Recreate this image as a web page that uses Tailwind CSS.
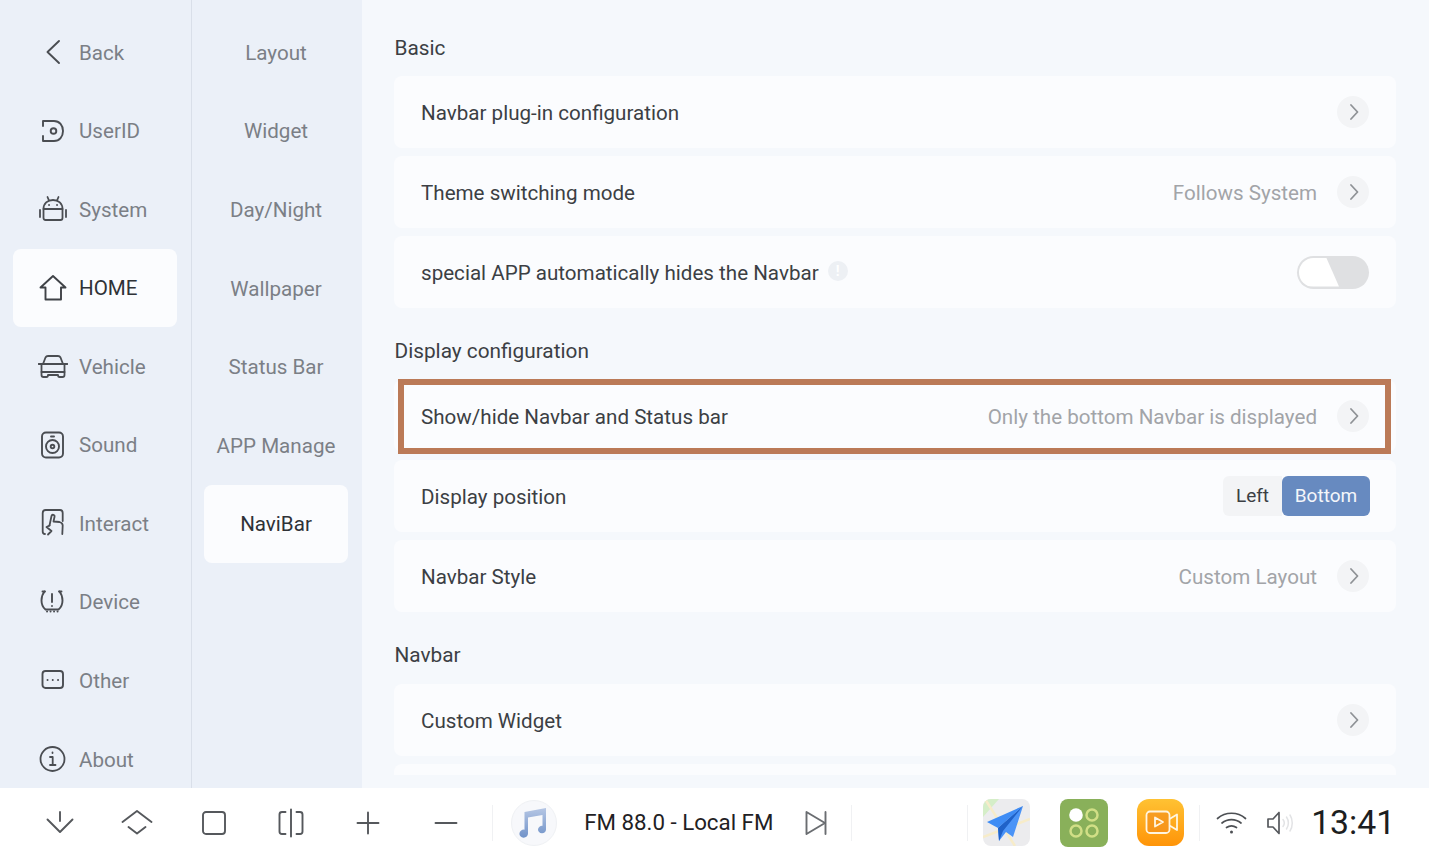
<!DOCTYPE html>
<html>
<head>
  <meta charset="UTF-8">
  <title>Settings</title>
  <script src="https://cdn.jsdelivr.net/npm/@tailwindcss/browser@4"></script>
</head>
<body class="w-[1429px] h-[857px] overflow-hidden bg-white font-['Roboto',sans-serif]">
  <div class="flex h-[788px] overflow-hidden">

    <!-- main menu -->
    <div class="w-[192px] shrink-0 bg-[#ebf0f8] border-r border-[#d9dfe9] pt-[13px] pl-[13px] pr-[14px] text-[20.6px] text-[#7b7f86]">
      <div class="h-[78.6px] flex items-center gap-[11px] pl-[25px]">
        <svg class="w-[30px] h-[30px]" viewBox="0 0 30 30" fill="none" stroke="#4a4d52" stroke-width="1.9" stroke-linecap="round" stroke-linejoin="round"><path d="M21 4 L9.5 15 L21 26"/></svg>
        <span class="pt-[2px]">Back</span>
      </div>
      <div class="h-[78.6px] flex items-center gap-[11px] pl-[25px]">
        <svg class="w-[30px] h-[30px]" viewBox="0 0 30 30" fill="none" stroke="#4a4d52" stroke-width="1.9" stroke-linecap="round" stroke-linejoin="round"><path d="M5 10 V5 H16 C21.5 5 25 9.5 25 15 C25 20.5 21.5 25 16 25 H5 V20"/><circle cx="15.5" cy="15" r="2.8"/></svg>
        <span class="pt-[2px]">UserID</span>
      </div>
      <div class="h-[78.6px] flex items-center gap-[11px] pl-[25px]">
        <svg class="w-[30px] h-[30px]" viewBox="0 0 30 30" fill="none" stroke="#4a4d52" stroke-width="1.8" stroke-linecap="round" stroke-linejoin="round"><path d="M5.5 15 C5.5 9.5 9.5 6 15 6 C20.5 6 24.5 9.5 24.5 15 V24 C24.5 25.5 23.5 26 22.5 26 H7.5 C6.5 26 5.5 25.5 5.5 24 Z"/><path d="M5.5 15 H24.5"/><path d="M9.5 3 L11 6.5 M20.5 3 L19 6.5"/><path d="M2 16 V23 M28 16 V23"/><path d="M11 11 h.1 M19 11 h.1"/></svg>
        <span class="pt-[2px]">System</span>
      </div>
      <div class="h-[78px] flex items-center gap-[11px] pl-[25px] bg-[#fbfcfe] rounded-lg text-[#2f3237]">
        <svg class="w-[30px] h-[30px]" viewBox="0 0 30 30" fill="none" stroke="#3f4247" stroke-width="1.9" stroke-linecap="round" stroke-linejoin="round"><path d="M15 3 L27.5 14.5 H23 V26.5 H7.5 V14.5 H2.5 Z"/></svg>
        <span class="pt-[2px]">HOME</span>
      </div>
      <div class="h-[78.6px] flex items-center gap-[11px] pl-[25px]">
        <svg class="w-[30px] h-[30px]" viewBox="0 0 30 30" fill="none" stroke="#4a4d52" stroke-width="1.8" stroke-linecap="round" stroke-linejoin="round"><path d="M5 13 L7.5 6.5 C8 5.5 8.8 5 10 5 H20 C21.2 5 22 5.5 22.5 6.5 L25 13"/><path d="M0.5 13 H29.5"/><path d="M3.5 13 V24 C3.5 25.5 4.5 26 5.5 26 H8.5 C9.5 26 10 25 10 24 H20 C20 25 20.5 26 21.5 26 H24.5 C25.5 26 26.5 25.5 26.5 24 V13"/><path d="M3.5 21 H26.5"/></svg>
        <span class="pt-[2px]">Vehicle</span>
      </div>
      <div class="h-[78.6px] flex items-center gap-[11px] pl-[25px]">
        <svg class="w-[30px] h-[30px]" viewBox="0 0 30 30" fill="none" stroke="#4a4d52" stroke-width="1.9" stroke-linecap="round" stroke-linejoin="round"><rect x="4" y="2.5" width="21" height="25" rx="4"/><circle cx="14.5" cy="16.5" r="6.5"/><circle cx="14.5" cy="16.5" r="1.8"/><path d="M13 6.5 H16"/></svg>
        <span class="pt-[2px]">Sound</span>
      </div>
      <div class="h-[78.6px] flex items-center gap-[11px] pl-[25px]">
        <svg class="w-[30px] h-[30px]" viewBox="0 0 30 30" fill="none" stroke="#4a4d52" stroke-width="1.8" stroke-linecap="round" stroke-linejoin="round"><path d="M7 26 C5.5 26 4.7 25 4.7 23.5 V5 C4.7 3 5.7 2 7.7 2 H22 C24 2 24.7 3 24.7 5 V13"/><path d="M11.5 17.5 L13.5 8 C14 6 17 6.5 16.5 9 L15.5 13.5 L21.5 14 C23.5 14.5 24.7 15.5 24.7 17.5 L24.3 26"/><path d="M11.5 17.5 L8.5 19 L13.5 23 L10 26.5"/></svg>
        <span class="pt-[2px]">Interact</span>
      </div>
      <div class="h-[78.6px] flex items-center gap-[11px] pl-[25px]">
        <svg class="w-[30px] h-[30px]" viewBox="0 0 30 30" fill="none" stroke="#4a4d52" stroke-width="1.9" stroke-linecap="round" stroke-linejoin="round"><path d="M6.5 4.5 C4.5 7 3.5 10 3.5 13.5 C3.5 17.5 5 20.5 7.5 22.5 H20.5 C23 20.5 24.5 17.5 24.5 13.5 C24.5 10 23.5 7 21.5 4.5"/><path d="M4.5 4.5 H7 M23.5 4.5 H21"/><path d="M14 7 V15 M14 19 V19.1"/><path d="M9 24.5 h.1 M12.5 24.5 h.1 M16 24.5 h.1 M19.5 24.5 h.1"/></svg>
        <span class="pt-[2px]">Device</span>
      </div>
      <div class="h-[78.6px] flex items-center gap-[11px] pl-[25px]">
        <svg class="w-[30px] h-[30px]" viewBox="0 0 30 30" fill="none" stroke="#4a4d52" stroke-width="1.9" stroke-linecap="round" stroke-linejoin="round"><rect x="4.5" y="6" width="20.5" height="17" rx="3"/><path d="M9.5 15 h.1 M14.7 15 h.1 M20 15 h.1"/></svg>
        <span class="pt-[2px]">Other</span>
      </div>
      <div class="h-[78.6px] flex items-center gap-[11px] pl-[25px]">
        <svg class="w-[30px] h-[30px]" viewBox="0 0 30 30" fill="none" stroke="#4a4d52" stroke-width="1.8" stroke-linecap="round" stroke-linejoin="round"><circle cx="14.5" cy="15" r="12"/><path d="M14.5 8.5 v.6 M12 13 H14.7 V21 M12 21 H17.5"/></svg>
        <span class="pt-[2px]">About</span>
      </div>
    </div>

    <!-- sub menu -->
    <div class="w-[170px] shrink-0 bg-[#ebf0f8] pt-[13px] pl-[12px] pr-[14px] text-[20.6px] text-[#7b7f86] text-center">
      <div class="h-[78.6px] pt-[2px] flex items-center justify-center">Layout</div>
      <div class="h-[78.6px] pt-[2px] flex items-center justify-center">Widget</div>
      <div class="h-[78.6px] pt-[2px] flex items-center justify-center">Day/Night</div>
      <div class="h-[78.6px] pt-[2px] flex items-center justify-center">Wallpaper</div>
      <div class="h-[78.6px] pt-[2px] flex items-center justify-center">Status Bar</div>
      <div class="h-[78.6px] pt-[2px] flex items-center justify-center">APP Manage</div>
      <div class="h-[78.6px] pt-[2px] flex items-center justify-center bg-[#fbfcfe] rounded-lg text-[#2f3237]">NaviBar</div>
    </div>

    <!-- settings -->
    <div class="flex-1 bg-[#f5f8fc] pl-[32px] pr-[33px] text-[20.6px] text-[#3c3f44] overflow-hidden">
      <div class="h-[76px] pt-[33px] leading-[30px] pl-[0.5px] text-[20.8px]">Basic</div>

      <div class="h-[72px] mb-2 flex items-center bg-[#fbfcfe] rounded-lg pl-[27px] pr-[27px]">
        <span class="flex-1 pt-[3px]">Navbar plug-in configuration</span>
        <span class="w-8 h-8 rounded-full bg-[#f3f4f6] flex items-center justify-center">
          <svg class="w-4 h-4 ml-[2px]" viewBox="0 0 16 16" fill="none" stroke="#8f9296" stroke-width="1.8" stroke-linecap="round" stroke-linejoin="round"><path d="M5 1 L11.5 8 L5 15"/></svg>
        </span>
      </div>
      <div class="h-[72px] mb-2 flex items-center bg-[#fbfcfe] rounded-lg pl-[27px] pr-[27px]">
        <span class="flex-1 pt-[3px]">Theme switching mode</span>
        <span class="text-[#a2a4a8] mr-[20px] pt-[3px]">Follows System</span>
        <span class="w-8 h-8 rounded-full bg-[#f3f4f6] flex items-center justify-center">
          <svg class="w-4 h-4 ml-[2px]" viewBox="0 0 16 16" fill="none" stroke="#8f9296" stroke-width="1.8" stroke-linecap="round" stroke-linejoin="round"><path d="M5 1 L11.5 8 L5 15"/></svg>
        </span>
      </div>
      <div class="h-[72px] flex items-center bg-[#fbfcfe] rounded-lg pl-[27px] pr-[27px]">
        <span class="pt-[3px]">special APP automatically hides the Navbar</span>
        <span class="ml-[9px] w-5 h-5 rounded-full bg-[#edf0f4] flex items-center justify-center -mt-[2px] text-white text-[14px] font-bold">!</span>
        <span class="flex-1"></span>
        <span class="relative w-[72px] h-[33px] rounded-full bg-[#dfe0e2] overflow-hidden">
          <span class="absolute left-[2px] top-[2px] w-[40px] h-[29px] bg-white rounded-l-full [clip-path:polygon(0_0,68%_0,100%_100%,0_100%)]"></span>
        </span>
      </div>

      <div class="h-[72px] pt-[28px] leading-[30px] pl-[0.5px] text-[20.8px]">Display configuration</div>

      <div class="relative h-[72px] mb-2 flex items-center bg-[#fbfcfe] rounded-lg pl-[27px] pr-[27px]">
        <span class="flex-1 pt-[3px]">Show/hide Navbar and Status bar</span>
        <span class="text-[#a2a4a8] mr-[20px] pt-[3px]">Only the bottom Navbar is displayed</span>
        <span class="w-8 h-8 rounded-full bg-[#f3f4f6] flex items-center justify-center">
          <svg class="w-4 h-4 ml-[2px]" viewBox="0 0 16 16" fill="none" stroke="#8f9296" stroke-width="1.8" stroke-linecap="round" stroke-linejoin="round"><path d="M5 1 L11.5 8 L5 15"/></svg>
        </span>
        <div class="absolute left-[4px] -top-px w-[993px] h-[75px] border-[6px] border-[#bb7a57]"></div>
      </div>
      <div class="h-[72px] mb-2 flex items-center bg-[#fbfcfe] rounded-lg pl-[27px] pr-[26px]">
        <span class="flex-1 pt-[3px]">Display position</span>
        <div class="flex h-10 text-[19px]">
          <span class="w-[59px] flex items-center justify-center bg-[#f3f4f6] rounded-l-md text-[#3c3f44]">Left</span>
          <span class="w-[88px] flex items-center justify-center bg-[#678ac0] rounded-md text-[#f4f6fa]">Bottom</span>
        </div>
      </div>
      <div class="h-[72px] flex items-center bg-[#fbfcfe] rounded-lg pl-[27px] pr-[27px]">
        <span class="flex-1 pt-[3px]">Navbar Style</span>
        <span class="text-[#a2a4a8] mr-[20px] pt-[3px]">Custom Layout</span>
        <span class="w-8 h-8 rounded-full bg-[#f3f4f6] flex items-center justify-center">
          <svg class="w-4 h-4 ml-[2px]" viewBox="0 0 16 16" fill="none" stroke="#8f9296" stroke-width="1.8" stroke-linecap="round" stroke-linejoin="round"><path d="M5 1 L11.5 8 L5 15"/></svg>
        </span>
      </div>

      <div class="h-[72px] pt-[28px] leading-[30px] pl-[0.5px] text-[20.8px]">Navbar</div>

      <div class="h-[72px] mb-2 flex items-center bg-[#fbfcfe] rounded-lg pl-[27px] pr-[27px]">
        <span class="flex-1 pt-[3px]">Custom Widget</span>
        <span class="w-8 h-8 rounded-full bg-[#f3f4f6] flex items-center justify-center">
          <svg class="w-4 h-4 ml-[2px]" viewBox="0 0 16 16" fill="none" stroke="#8f9296" stroke-width="1.8" stroke-linecap="round" stroke-linejoin="round"><path d="M5 1 L11.5 8 L5 15"/></svg>
        </span>
      </div>
      <div class="h-[11px] bg-[#fbfcfe] rounded-t-lg"></div>
    </div>
  </div>

  <!-- bottom bar -->
  <div class="h-[69px] flex items-center bg-white pl-[21px]">
    <div class="w-[77.2px] flex justify-center">
      <svg class="w-[30px] h-[30px]" viewBox="0 0 30 30" fill="none" stroke="#55585c" stroke-width="1.9" stroke-linecap="round" stroke-linejoin="round"><path d="M2.5 11.5 L15 24 L27.5 11.5"/><path d="M15 4 V13"/></svg>
    </div>
    <div class="w-[77.2px] flex justify-center">
      <svg class="w-[32px] h-[30px]" viewBox="0 0 32 30" fill="none" stroke="#55585c" stroke-width="1.9" stroke-linecap="round" stroke-linejoin="round"><path d="M1.5 14 L16 3 L30.5 14"/><path d="M7.5 19 L16 25.5 L24.5 19"/></svg>
    </div>
    <div class="w-[77.2px] flex justify-center">
      <svg class="w-[30px] h-[30px]" viewBox="0 0 30 30" fill="none" stroke="#55585c" stroke-width="1.9"><rect x="4" y="4" width="22" height="22" rx="3"/></svg>
    </div>
    <div class="w-[77.2px] flex justify-center">
      <svg class="w-[30px] h-[30px]" viewBox="0 0 30 30" fill="none" stroke="#55585c" stroke-width="1.9" stroke-linecap="round" stroke-linejoin="round"><path d="M9.5 4 H6 C4.5 4 3.5 5 3.5 6.5 V23.5 C3.5 25 4.5 26 6 26 H9.5"/><path d="M20.5 4 H24 C25.5 4 26.5 5 26.5 6.5 V23.5 C26.5 25 25.5 26 24 26 H20.5"/><path d="M15 1.5 V28.5"/></svg>
    </div>
    <div class="w-[77.2px] flex justify-center">
      <svg class="w-[30px] h-[30px]" viewBox="0 0 30 30" fill="none" stroke="#55585c" stroke-width="1.9" stroke-linecap="round"><path d="M4.5 15 H25.5 M15 4.5 V25.5"/></svg>
    </div>
    <div class="w-[77.2px] flex justify-center">
      <svg class="w-[30px] h-[30px]" viewBox="0 0 30 30" fill="none" stroke="#55585c" stroke-width="1.9" stroke-linecap="round"><path d="M4.5 15 H25.5"/></svg>
    </div>

    <div class="ml-[8px] w-px h-[36px] bg-[#f0f1f3]"></div>
    <div class="ml-[18px] w-[46px] h-[46px] rounded-full bg-[#f7f8fb] border border-[#eff1f4] flex items-center justify-center">
      <svg class="w-[34px] h-[34px] -ml-[6px]" viewBox="0 0 34 34">
        <defs><linearGradient id="note" x1="0" y1="0" x2="0" y2="1"><stop offset="0" stop-color="#b5c6e4"/><stop offset="1" stop-color="#7193c9"/></linearGradient></defs>
        <path fill="url(#note)" d="M10.5 6 L32 2 V23.5 A4 3.8 0 1 1 28.5 19.8 V9 L14 11.5 V27.5 A4.3 4 0 1 1 10.5 23.7 Z"/>
      </svg>
    </div>
    <span class="ml-[27px] w-[188px] text-[22.3px] text-[#1f2124] whitespace-nowrap">FM 88.0 - Local FM</span>
    <svg class="ml-[29px] w-[30px] h-[30px]" viewBox="0 0 30 30" fill="none" stroke="#6a6d71" stroke-width="1.9" stroke-linejoin="round" stroke-linecap="round"><path d="M5.5 4 L24 15 L5.5 26 Z"/><path d="M24.5 4 V26"/></svg>
    <div class="ml-[20px] w-px h-[36px] bg-[#f0f1f3]"></div>

    <div class="ml-[115px] w-px h-[36px] bg-[#f0f1f3]"></div>
    <svg class="ml-[15px] w-[47px] h-[47px] rounded-lg" viewBox="0 0 47 47">
      <rect width="47" height="47" fill="#ececee"/>
      <path d="M0 0 H16 L0 18 Z" fill="#d5eec8"/>
      <path d="M2 0 L32 47 M0 38 L47 20" stroke="#f7ecc9" stroke-width="2.5" fill="none"/>
      <path d="M40 7 L4 23 L15 29 Z" fill="#3e8cf5"/>
      <path d="M40 7 L15 29 L16 42 L23 33 L30 38 Z" fill="#4b94f7"/>
      <path d="M40 7 L15 29 L16 42 L20 32 Z" fill="#1f62c9"/>
    </svg>
    <svg class="ml-[30px] w-[48px] h-[48px] rounded-lg" viewBox="0 0 48 48">
      <rect width="48" height="48" fill="#89b05a"/>
      <circle cx="16" cy="16" r="6.8" fill="#fff"/>
      <circle cx="32" cy="16" r="5.5" fill="none" stroke="#d1df86" stroke-width="2.5"/>
      <circle cx="16" cy="32" r="5.5" fill="none" stroke="#d1df86" stroke-width="2.5"/>
      <circle cx="32" cy="32" r="5.5" fill="none" stroke="#d1df86" stroke-width="2.5"/>
    </svg>
    <svg class="ml-[29px] w-[47px] h-[47px] rounded-[12px]" viewBox="0 0 47 47">
      <defs><linearGradient id="vid" x1="0" y1="0" x2="0" y2="1"><stop offset="0" stop-color="#ffc233"/><stop offset="1" stop-color="#ff9408"/></linearGradient></defs>
      <rect width="47" height="47" fill="url(#vid)"/>
      <rect x="9.5" y="12.5" width="23" height="21.5" rx="3.5" fill="#f08a1c" fill-opacity=".55" stroke="#fff5e0" stroke-width="1.8"/>
      <path d="M32.5 20 L40 15.5 V31 L32.5 26.5" fill="none" stroke="#fff5e0" stroke-width="1.8" stroke-linejoin="round"/>
      <path d="M18 18.5 L26 23 L18 27.5 Z" fill="none" stroke="#fff5e0" stroke-width="1.8" stroke-linejoin="round"/>
    </svg>
    <div class="ml-[15px] w-px h-[36px] bg-[#f0f1f3]"></div>

    <svg class="ml-[16px] w-[31px] h-[30px]" viewBox="0 0 30 30" fill="none" stroke="#4d5054" stroke-width="1.7" stroke-linecap="round"><path d="M1 10.5 C9 3.5 21 3.5 29 10.5"/><path d="M5.5 15 C11 10.5 19 10.5 24.5 15"/><path d="M10 19.5 C13 17.5 17 17.5 20 19.5"/><circle cx="15" cy="24" r="1.5" fill="#4d5054" stroke="none"/></svg>
    <svg class="ml-[18px] w-[30px] h-[30px]" viewBox="0 0 30 30" fill="none" stroke-linejoin="round" stroke-linecap="round"><path d="M3 11 H8 L14 4.5 V25.5 L8 19 H3 Z" stroke="#55585c" stroke-width="1.7"/><path d="M18 11.5 C19.5 13.5 19.5 16.5 18 18.5 M21.5 9 C24 12.5 24 17.5 21.5 21 M25 7 C28 11.5 28 18.5 25 23" stroke="#e2e3e5" stroke-width="1.5"/></svg>
    <span class="ml-[16px] text-[33.8px] leading-none text-[#1c1e21]">13:41</span>
  </div>
</body>
</html>
